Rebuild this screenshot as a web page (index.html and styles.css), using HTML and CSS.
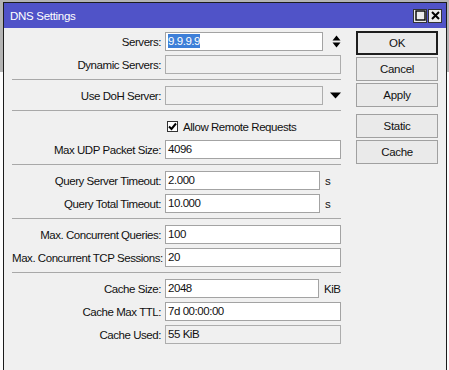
FILE: index.html
```html
<!DOCTYPE html>
<html lang="en">
  <head>
    <meta charset="UTF-8" />
    <title>DNS Settings</title>
    <link rel="stylesheet" href="styles.css">
  </head>
  <body>
    <div class="window">
      <div class="titlebar">
        <span class="title">DNS Settings</span>
        <div class="tb-buttons">
          <span class="tb-btn">
            <svg width="11" height="11" viewBox="0 0 11 11"><rect x="1" y="1" width="9" height="9" fill="none" stroke="#000" stroke-width="1.4"/></svg>
          </span>
          <span class="tb-btn">
            <svg width="11" height="11" viewBox="0 0 11 11"><path d="M2 2 L9 9 M9 2 L2 9" stroke="#000" stroke-width="2"/></svg>
          </span>
        </div>
      </div>

      <div class="content">
        <div class="form">
          <div class="row">
            <label>Servers:</label>
            <div class="field">
              <span class="input w158"><span class="sel">9.9.9.9</span></span>
              <svg class="spin" width="9" height="13" viewBox="0 0 9 13"><path d="M0.5 5.5 L4.5 0.5 L8.5 5.5 Z M0.5 7.5 L8.5 7.5 L4.5 12.5 Z" fill="#000"/></svg>
            </div>
          </div>
          <div class="row">
            <label>Dynamic Servers:</label>
            <div class="field"><span class="input disabled"></span></div>
          </div>

          <div class="sep"></div>

          <div class="row">
            <label>Use DoH Server:</label>
            <div class="field">
              <span class="input disabled w158"></span>
              <svg class="drop" width="11" height="7" viewBox="0 0 11 7"><path d="M0 0.5 L11 0.5 L5.5 6.5 Z" fill="#000"/></svg>
            </div>
          </div>

          <div class="sep"></div>

          <div class="row">
            <span></span>
            <div class="field check-field">
              <span class="checkbox">
                <svg width="9" height="9" viewBox="0 0 9 9"><path d="M1 4.5 L3.5 7 L8 1.5" fill="none" stroke="#000" stroke-width="2"/></svg>
              </span>
              <span>Allow Remote Requests</span>
            </div>
          </div>
          <div class="row">
            <label>Max UDP Packet Size:</label>
            <div class="field"><span class="input">4096</span></div>
          </div>

          <div class="sep"></div>

          <div class="row">
            <label>Query Server Timeout:</label>
            <div class="field"><span class="input w155">2.000</span><span class="unit">s</span></div>
          </div>
          <div class="row">
            <label>Query Total Timeout:</label>
            <div class="field"><span class="input w155">10.000</span><span class="unit">s</span></div>
          </div>

          <div class="sep"></div>

          <div class="row">
            <label>Max. Concurrent Queries:</label>
            <div class="field"><span class="input">100</span></div>
          </div>
          <div class="row">
            <label>Max. Concurrent TCP Sessions:</label>
            <div class="field"><span class="input">20</span></div>
          </div>

          <div class="sep"></div>

          <div class="row">
            <label>Cache Size:</label>
            <div class="field"><span class="input w154">2048</span><span class="unit">KiB</span></div>
          </div>
          <div class="row">
            <label>Cache Max TTL:</label>
            <div class="field"><span class="input">7d 00:00:00</span></div>
          </div>
          <div class="row">
            <label>Cache Used:</label>
            <div class="field"><span class="input disabled">55 KiB</span></div>
          </div>
        </div>

        <div class="buttons">
          <button class="btn default">OK</button>
          <button class="btn">Cancel</button>
          <button class="btn">Apply</button>
          <button class="btn group">Static</button>
          <button class="btn">Cache</button>
        </div>
      </div>
    </div>
  </body>
</html>
```

FILE: styles.css
```css
body {
  margin: 0;
  height: 370px;
  overflow: hidden;
  font-family: "Liberation Sans", Arial, sans-serif;
  font-size: 11.5px;
  letter-spacing: -0.45px;
  color: #111;
  background: linear-gradient(to bottom, #b4b4b4 0, #b4b4b4 72px, #fdfdfd 72px);
}
.window {
  margin: 2px 0 0 3px;
  width: 442px;
  height: 368px;
  border: 1px solid #1c1c1c;
  border-bottom: none;
  background-color: #f0f0f0;
}
.titlebar {
  height: 25px;
  background-color: #5053c8;
  display: flex;
  align-items: center;
  justify-content: space-between;
  padding: 0 4px 0 6px;
}
.title {
  color: #fff;
  font-size: 11.5px;
  letter-spacing: -0.3px;
}
.tb-buttons {
  display: flex;
  gap: 1px;
}
.tb-btn {
  width: 12px;
  height: 12px;
  background-color: #ececec;
  border: 1px solid #333;
  display: flex;
  align-items: center;
  justify-content: center;
}
.content {
  display: flex;
  padding-top: 2px;
}
.form {
  width: 329px;
  padding-left: 8px;
}
.row {
  display: grid;
  grid-template-columns: 149px 1fr;
  column-gap: 4px;
  height: 23px;
  align-items: center;
}
.row label {
  text-align: right;
  white-space: nowrap;
}
.field {
  display: flex;
  align-items: center;
}
.input {
  box-sizing: border-box;
  width: 176px;
  height: 19px;
  background-color: #fff;
  border: 1px solid #a3a3a3;
  padding: 0 2px;
  line-height: 17px;
  white-space: nowrap;
}
.input.disabled {
  background-color: #f0f0f0;
  border-color: #adadad;
}
.w158 {
  width: 158px;
}
.w155 {
  width: 155px;
}
.w154 {
  width: 154px;
}
.sel {
  background-color: #3d7fd8;
  color: #fff;
  padding: 1px 0;
}
.spin {
  margin-left: 9px;
}
.drop {
  margin-left: 7px;
}
.unit {
  margin-left: 5px;
}
.check-field {
  gap: 5px;
}
.checkbox {
  box-sizing: border-box;
  width: 11px;
  height: 11px;
  margin-left: 2px;
  background-color: #fff;
  border: 1px solid #333;
  display: flex;
  align-items: center;
  justify-content: center;
}
.sep {
  height: 1px;
  background-color: #a8a8a8;
  margin: 3px 0 4px;
}
.buttons {
  display: flex;
  flex-direction: column;
  gap: 2px;
  margin-left: 15px;
  padding-top: 1px;
}
.btn {
  width: 82px;
  height: 24px;
  font-family: inherit;
  font-size: 11.5px;
  letter-spacing: -0.3px;
  color: #111;
  background-color: #eaeaea;
  border: 1px solid #a0a0a0;
  padding: 0;
}
.btn.default {
  border: 2px solid #1e1e1e;
}
.btn.group {
  margin-top: 5px;
}
```
